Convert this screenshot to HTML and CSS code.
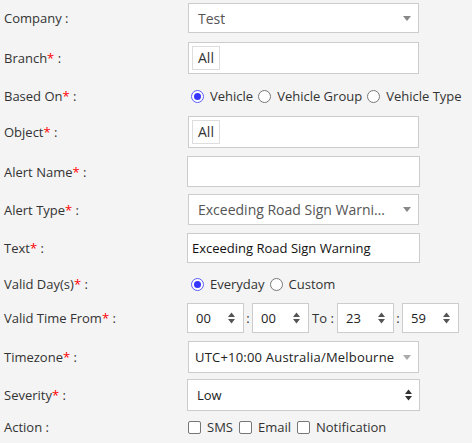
FILE: index.html
```html
<!DOCTYPE html>
<html lang="en">

<head>
  <meta charset="UTF-8" />
  <meta name="viewport" content="width=device-width, initial-scale=1.0" />
  <title>Alert</title>
  <link rel="stylesheet" href="styles.css">
</head>

<body>
  <form class="alert-form">
    <div class="lbl">Company :</div>
    <div class="fld">
      <div class="select company"><span>Test</span><i class="caret"></i></div>
    </div>

    <div class="lbl">Branch<b>*</b> :</div>
    <div class="fld">
      <div class="tags"><span class="tag">All</span></div>
    </div>

    <div class="lbl">Based On<b>*</b> :</div>
    <div class="fld opts radios">
      <label class="opt"><span class="radio checked"></span>Vehicle</label>
      <label class="opt"><span class="radio"></span>Vehicle Group</label>
      <label class="opt"><span class="radio"></span>Vehicle Type</label>
    </div>

    <div class="lbl">Object<b>*</b> :</div>
    <div class="fld">
      <div class="tags"><span class="tag">All</span></div>
    </div>

    <div class="lbl">Alert Name<b>*</b> :</div>
    <div class="fld">
      <input class="input name" type="text" />
    </div>

    <div class="lbl">Alert Type<b>*</b> :</div>
    <div class="fld">
      <div class="select alert-type"><span>Exceeding Road Sign Warning Alert</span><i class="caret"></i></div>
    </div>

    <div class="lbl">Text<b>*</b> :</div>
    <div class="fld">
      <input class="input text" type="text" value="Exceeding Road Sign Warning" />
    </div>

    <div class="lbl">Valid Day(s)<b>*</b> :</div>
    <div class="fld opts radios">
      <label class="opt"><span class="radio checked"></span>Everyday</label>
      <label class="opt"><span class="radio"></span>Custom</label>
    </div>

    <div class="lbl">Valid Time From<b>*</b> :</div>
    <div class="fld time-row">
      <div class="spin"><span>00</span><svg width="7" height="12" viewBox="0 0 7 12"><path d="M3.5 0.5 L7 5 L0 5 Z M0 7 L7 7 L3.5 11.5 Z" fill="#555"/></svg></div>
      <span class="sep">:</span>
      <div class="spin"><span>00</span><svg width="7" height="12" viewBox="0 0 7 12"><path d="M3.5 0.5 L7 5 L0 5 Z M0 7 L7 7 L3.5 11.5 Z" fill="#555"/></svg></div>
      <span class="sep to">To :</span>
      <div class="spin"><span>23</span><svg width="7" height="12" viewBox="0 0 7 12"><path d="M3.5 0.5 L7 5 L0 5 Z M0 7 L7 7 L3.5 11.5 Z" fill="#555"/></svg></div>
      <span class="sep">:</span>
      <div class="spin"><span>59</span><svg width="7" height="12" viewBox="0 0 7 12"><path d="M3.5 0.5 L7 5 L0 5 Z M0 7 L7 7 L3.5 11.5 Z" fill="#555"/></svg></div>
    </div>

    <div class="lbl">Timezone<b>*</b> :</div>
    <div class="fld">
      <div class="select tz"><span>UTC+10:00 Australia/Melbourne</span><i class="caret light"></i></div>
    </div>

    <div class="lbl">Severity<b>*</b> :</div>
    <div class="fld">
      <div class="select severity"><span>Low</span><svg width="7" height="12" viewBox="0 0 7 12"><path d="M3.5 0.5 L7 5 L0 5 Z M0 7 L7 7 L3.5 11.5 Z" fill="#333"/></svg></div>
    </div>

    <div class="lbl">Action :</div>
    <div class="fld opts checks">
      <label class="opt"><span class="check"></span>SMS</label>
      <label class="opt"><span class="check"></span>Email</label>
      <label class="opt"><span class="check"></span>Notification</label>
    </div>
  </form>
</body>

</html>
```

FILE: styles.css
```css
* {
  box-sizing: border-box;
}

html,
body {
  overflow: hidden;
}

body {
  margin: 0;
  padding: 0 0 0 4px;
  background: #f4f4f4;
  font-family: "Open Sans", Arial, sans-serif;
  font-size: 13px;
  color: #333;
}

.alert-form {
  display: grid;
  grid-template-columns: 183px 1fr;
  grid-template-rows: 36px 44px 32px 40px 39px 37px 40px 32px 36px 42px 34px 30px;
  align-items: center;
}

.lbl {
  white-space: nowrap;
}

.lbl b {
  color: #f00;
  font-weight: normal;
}

.fld {
  display: flex;
  align-items: center;
}

/* select look */
.select {
  display: flex;
  align-items: center;
  justify-content: space-between;
  width: 231px;
  height: 30px;
  margin-left: 1px;
  padding: 0 7px 0 9px;
  background: #fff;
  border: 1px solid #ccc;
  color: #555;
  font-size: 14px;
}

.select span {
  overflow: hidden;
  white-space: nowrap;
  text-overflow: ellipsis;
  margin-right: 10px;
}

.caret {
  flex: none;
  width: 0;
  height: 0;
  border-left: 4px solid transparent;
  border-right: 4px solid transparent;
  border-top: 5px solid #888;
}

.caret.light {
  border-top-color: #aaa;
}

.alert-type {
  height: 31px;
}

.tz {
  height: 32px;
  padding-left: 6px;
  font-size: 13px;
  letter-spacing: 0.2px;
  color: #222;
}

.tz span {
  margin-right: 4px;
}

.severity {
  width: 233px;
  height: 32px;
  margin-left: 0;
  font-size: 13px;
  color: #222;
}

/* tag boxes */
.tags {
  width: 231px;
  height: 32px;
  margin-left: 1px;
  padding: 3px;
  background: #fff;
  border: 1px solid #ccc;
}

.tag {
  display: inline-block;
  height: 24px;
  line-height: 22px;
  padding: 0 5px;
  border: 1px solid #ddd;
  background: #fff;
  color: #333;
  font-size: 14px;
}

.input {
  width: 233px;
  height: 31px;
  margin: 0;
  padding: 0 4px;
  border: 1px solid #ccc;
  border-radius: 0;
  background: #fff;
  font-family: inherit;
  font-size: 13px;
  color: #111;
  outline: none;
}

.input.text {
  height: 30px;
}

/* radios & checks */
.opts {
  gap: 5px;
  white-space: nowrap;
}

.opt {
  display: flex;
  align-items: center;
  gap: 6px;
  color: #333;
}

.radios {
  padding-left: 4px;
}

.radio {
  position: relative;
  width: 13px;
  height: 13px;
  border: 1px solid #777;
  border-radius: 50%;
  background: #fff;
}

.radio.checked {
  border-color: #5a5aff;
}

.radio.checked::after {
  content: "";
  position: absolute;
  top: 2px;
  left: 2px;
  width: 7px;
  height: 7px;
  border-radius: 50%;
  background: #3535ff;
}

.checks {
  padding-left: 1px;
  gap: 6px;
}

.check {
  width: 13px;
  height: 13px;
  border: 1px solid #777;
  border-radius: 2px;
  background: #fff;
}

/* time row */
.time-row {
  gap: 0;
}

.spin {
  display: flex;
  align-items: center;
  justify-content: space-between;
  width: 57px;
  height: 30px;
  padding: 0 8px 0 8px;
  background: #fff;
  border: 1px solid #ccc;
  color: #222;
}

.sep {
  width: 8px;
  text-align: center;
}

.sep.to {
  width: 28px;
}
```
